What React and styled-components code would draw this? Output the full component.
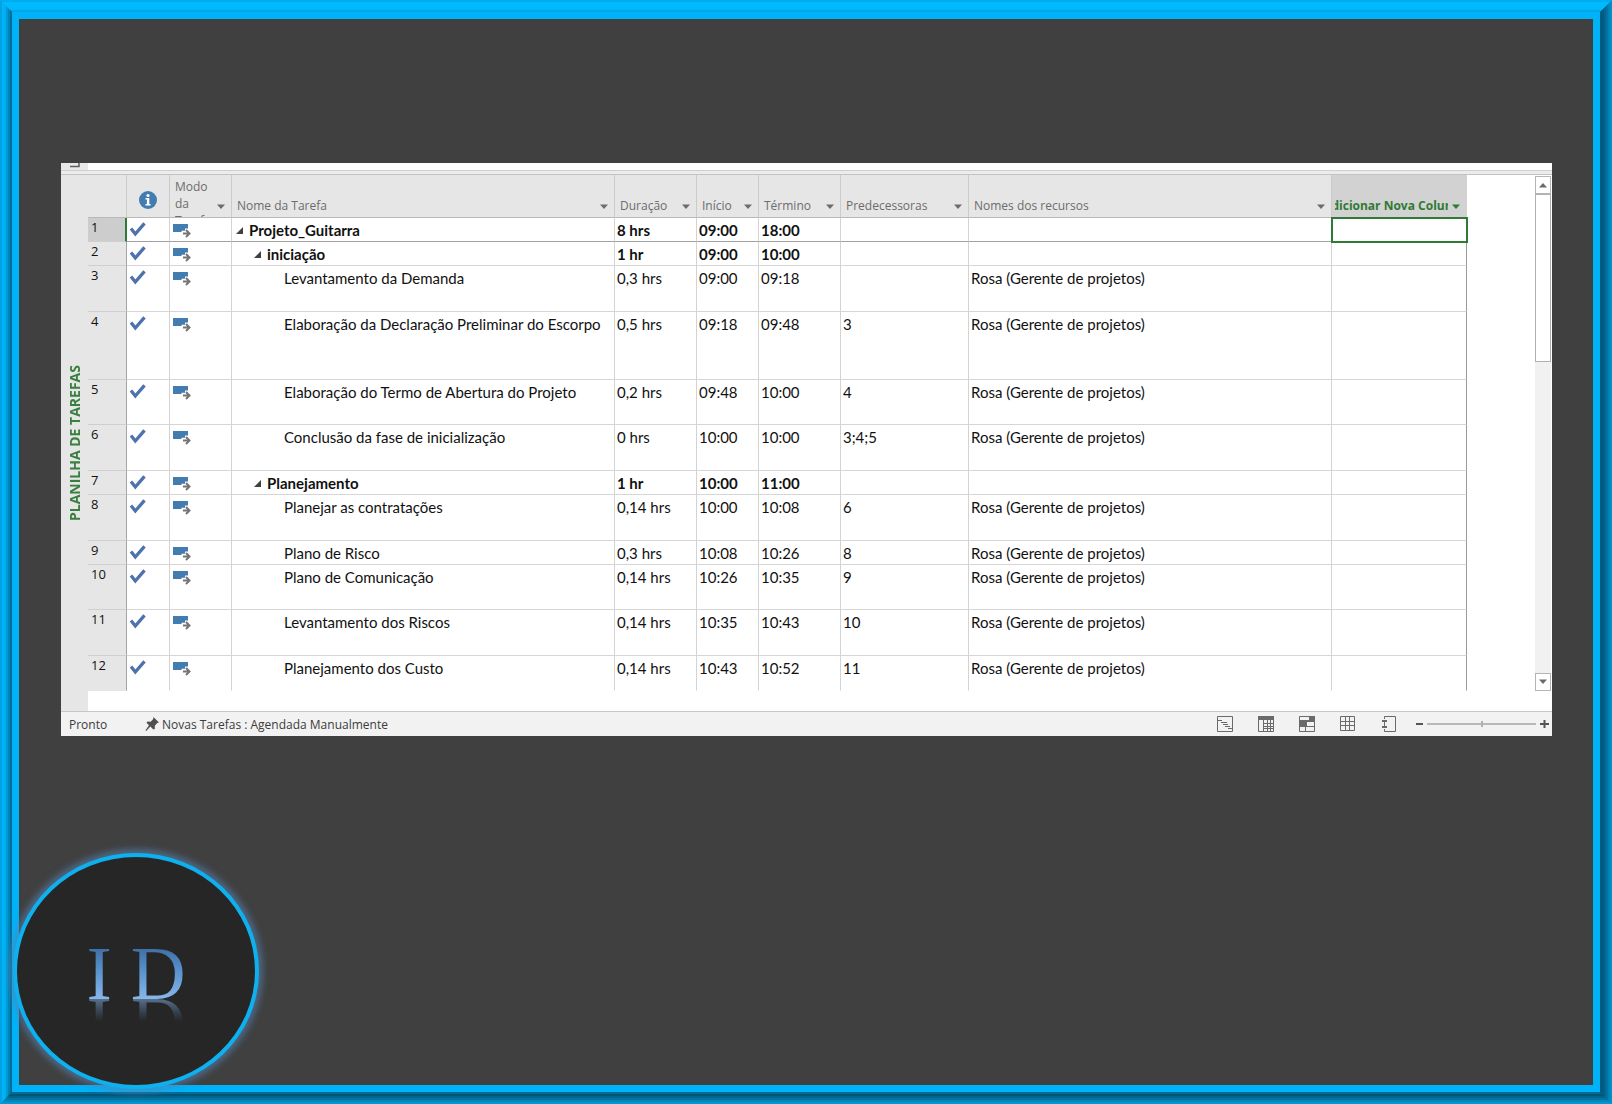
import React from 'react'
import styled, { createGlobalStyle } from 'styled-components'

/*
sky        #00b3f5 // frame and badge ring
charcoal   #404040 // page
green      #2f7a34 // selection
steel      #457cb0 // icons
light-grey #e6e6e6 // headers
*/

const SANS = "'Open Sans', 'Noto Sans', sans-serif"
const BODY = "Lato, 'Open Sans', sans-serif"

const GlobalStyle = createGlobalStyle`
  * { box-sizing: border-box; }
  body {
    margin: 0;
    background: #404040;
  }
  button {
    margin: 0;
    padding: 0;
    border: 0;
    background: none;
    font: inherit;
    color: inherit;
    cursor: pointer;
  }
`

const Bevel = styled.div`
  display: flex;
  flex: 1;
  flex-direction: column;
  min-width: 0;
  min-height: ${props => (props.$outer ? '100vh' : '0')};
  border-style: solid;
  border-width: ${props => props.$size}px;
  border-color: ${props => props.$colors};
`

const Slide = styled.main`
  flex: 1;
  padding: 144px 41px 42px 42px;
  background: #404040;
`

const Panel = styled.section`
  background: #ffffff;
  color: #111111;
  font-family: ${BODY};
  font-size: 15px;
`

const TopStrip = styled.div`
  display: flex;
  height: 12px;
  border-bottom: 1px solid #c3c3c3;
  background: linear-gradient(transparent 7px, #cfcfcf 7px, #cfcfcf 8px, #ececec 8px);
`
const TopCorner = styled.div`
  display: flex;
  align-items: flex-start;
  width: 27px;
  height: 7px;
  padding-left: 8px;
  background: #e9e9e9;
`

const Sheet = styled.div`
  display: flex;
  align-items: stretch;
`

const ViewRail = styled.div`
  display: flex;
  align-items: center;
  justify-content: center;
  width: 27px;
  background: #e6e6e6;
`
const ViewName = styled.h1`
  margin: 0;
  color: #3a7f3f;
  font-family: ${SANS};
  font-size: 14px;
  font-weight: 700;
  line-height: 20px;
  white-space: nowrap;
  writing-mode: vertical-rl;
  transform: rotate(180deg);
`

const GridArea = styled.div`
  flex: 1;
  min-width: 0;
  padding: 0 68px 20px 0;
`

const Table = styled.table`
  width: 100%;
  table-layout: fixed;
  border-collapse: separate;
  border-spacing: 0;
`

const HeadCell = styled.th`
  height: 43px;
  padding: 0;
  border-right: 1px solid ${props => (props.$active ? '#d2d2d2' : '#cbcbcb')};
  border-bottom: 1px solid #b9b9b9;
  background: ${props => (props.$active ? '#d2d2d2' : '#e6e6e6')};
  color: ${props => (props.$active ? '#2f7a34' : '#6c6c6c')};
  font-family: ${SANS};
  font-size: 12px;
  font-weight: ${props => (props.$active ? 700 : 400)};
  line-height: 17px;
  text-align: left;
  vertical-align: top;
`
const HeadInner = styled.div`
  display: flex;
  gap: 3px;
  align-items: ${props => (props.$wrap ? 'flex-start' : 'flex-end')};
  height: 42px;
  padding: 3px 5px 3px ${props => (props.$active ? 3 : 5)}px;
  overflow: hidden;
`
const HeadLabel = styled.span`
  display: flex;
  flex: 1;
  justify-content: ${props => (props.$active ? 'center' : 'flex-start')};
  min-width: 0;
  overflow: ${props => (props.$active ? 'hidden' : 'visible')};
  white-space: ${props => (props.$wrap ? 'normal' : 'nowrap')};
`
const HeadIcon = styled.div`
  display: flex;
  align-items: center;
  justify-content: center;
  height: 42px;
  padding-top: 7px;
`
const FilterButton = styled.button`
  display: flex;
  align-items: center;
  justify-content: center;
  align-self: flex-end;
  width: 10px;
  height: 14px;
`

const RowNumber = styled.th`
  padding: 0 0 0 3px;
  border-right: ${props => (props.$active ? '2px solid #2f7a34' : '1px solid #a3a3a3')};
  border-bottom: 1px solid ${props => (props.$last ? '#e6e6e6' : '#cfcfcf')};
  background: ${props => (props.$active ? '#cdcdcd' : '#e6e6e6')};
  font-family: ${SANS};
  font-size: 13px;
  font-weight: 400;
  line-height: 19px;
  text-align: left;
  vertical-align: top;
`

const Cell = styled.td`
  padding: 1px 2px 0;
  border-right: 1px solid ${props => (props.$edge ? '#9a9a9a' : '#d3d3d3')};
  border-bottom: 1px solid ${props => props.$line};
  font-weight: ${props => (props.$bold ? 700 : 400)};
  line-height: 22px;
  white-space: nowrap;
  vertical-align: top;
  outline: ${props => (props.$selected ? '2px solid #2f7a34' : 'none')};
  outline-offset: -1px;
  svg { display: block; }
`
const TaskName = styled.div`
  display: flex;
  align-items: center;
  padding-left: ${props => props.$indent}px;
`
const Collapse = styled.button`
  display: flex;
  width: 13px;
`

const ScrollBar = styled.div`
  display: flex;
  flex-direction: column;
  width: 17px;
  padding: 1px 1px 20px 0;
`
const ScrollButton = styled.button`
  display: flex;
  align-items: center;
  justify-content: center;
  height: 18px;
  border: 1px solid #b5b5b5;
  background: #ffffff;
  color: #6a6a6a;
`
const Track = styled.div`
  flex: 1;
  background: #f1f1f1;
`
const Thumb = styled.div`
  height: 35%;
  border: 1px solid #b0b0b0;
  background: #ffffff;
`

const StatusBar = styled.footer`
  display: flex;
  align-items: center;
  height: 25px;
  padding: 0 3px 0 8px;
  border-top: 1px solid #c6c6c6;
  background: #f2f2f2;
  color: #3c3c3c;
  font-family: ${SANS};
  font-size: 12px;
`
const StatusText = styled.span`
  width: 76px;
`
const NewTasks = styled.button`
  display: flex;
  align-items: center;
  gap: 2px;
`
const Views = styled.div`
  display: flex;
  gap: 25px;
  margin: 0 19px 0 auto;
`
const ViewButton = styled.button`
  display: flex;
`
const Zoom = styled.div`
  display: flex;
  align-items: center;
  gap: 4px;
`
const ZoomButton = styled.button`
  display: flex;
`
const ZoomSlider = styled.input`
  width: 109px;
  height: 12px;
  margin: 0;
  appearance: none;
  background: linear-gradient(#b8b8b8, #b8b8b8) center / 100% 2px no-repeat;
  &::-webkit-slider-thumb {
    appearance: none;
    width: 2px;
    height: 6px;
    background: #b0b0b0;
  }
`

// sits on top of the frame in the corner of the slide
const Badge = styled.div`
  position: absolute;
  left: 13px;
  top: 853px;
  display: flex;
  align-items: center;
  justify-content: center;
  width: 246px;
  height: 236px;
  padding-top: 4px;
  border: 4px solid #0fb0ee;
  border-radius: 50%;
  background: #262626;
  box-shadow: 0 0 6px 4px rgba(84, 130, 180, 0.6);
`
const Initials = styled.span`
  background: linear-gradient(#3f6ea5 20%, #5b95d0 50%, #86b6ea 80%);
  background-clip: text;
  color: transparent;
  font-family: 'Liberation Serif', serif;
  font-size: 76px;
  line-height: 84px;
  -webkit-box-reflect: below -32px linear-gradient(transparent 54%, rgba(0, 0, 0, 0.5) 80%);
`

const COLUMNS = [
  { id: 'mode', title: 'Modo da Tarefa', width: 62, wrap: true },
  { id: 'name', title: 'Nome da Tarefa', width: 383 },
  { id: 'duration', title: 'Duração', width: 82 },
  { id: 'start', title: 'Início', width: 62 },
  { id: 'end', title: 'Término', width: 82 },
  { id: 'pred', title: 'Predecessoras', width: 128 },
  { id: 'resource', title: 'Nomes dos recursos' },
  { id: 'add', title: 'Adicionar Nova Coluna', width: 135, active: true },
]

const ROSA = 'Rosa (Gerente de projetos)'

const TASKS = [
  { id: 1, height: 24, level: 0, name: 'Projeto_Guitarra', duration: '8 hrs', start: '09:00', end: '18:00' },
  { id: 2, height: 24, level: 1, name: 'iniciação', duration: '1 hr', start: '09:00', end: '10:00' },
  { id: 3, height: 46, level: 2, name: 'Levantamento da Demanda', duration: '0,3 hrs', start: '09:00', end: '09:18', resource: ROSA },
  { id: 4, height: 68, level: 2, name: 'Elaboração da Declaração Preliminar do Escorpo', duration: '0,5 hrs', start: '09:18', end: '09:48', pred: '3', resource: ROSA },
  { id: 5, height: 45, level: 2, name: 'Elaboração do Termo de Abertura do Projeto', duration: '0,2 hrs', start: '09:48', end: '10:00', pred: '4', resource: ROSA },
  { id: 6, height: 46, level: 2, name: 'Conclusão da fase de inicialização', duration: '0 hrs', start: '10:00', end: '10:00', pred: '3;4;5', resource: ROSA },
  { id: 7, height: 24, level: 1, name: 'Planejamento', duration: '1 hr', start: '10:00', end: '11:00' },
  { id: 8, height: 46, level: 2, name: 'Planejar as contratações', duration: '0,14 hrs', start: '10:00', end: '10:08', pred: '6', resource: ROSA },
  { id: 9, height: 24, level: 2, name: 'Plano de Risco', duration: '0,3 hrs', start: '10:08', end: '10:26', pred: '8', resource: ROSA },
  { id: 10, height: 45, level: 2, name: 'Plano de Comunicação', duration: '0,14 hrs', start: '10:26', end: '10:35', pred: '9', resource: ROSA },
  { id: 11, height: 46, level: 2, name: 'Levantamento dos Riscos', duration: '0,14 hrs', start: '10:35', end: '10:43', pred: '10', resource: ROSA },
  { id: 12, height: 35, level: 2, name: 'Planejamento dos Custo', duration: '0,14 hrs', start: '10:43', end: '10:52', pred: '11', resource: ROSA },
]

const INDENTS = [2, 20, 50]

// outer to inner: top right bottom left
const BEVELS = [
  { size: 2, colors: '#00aef0 #0090c8 #0098d4 #00a2e2' },
  { size: 2, colors: '#00b9ff #0082b6 #0088bc #00b4f8' },
  { size: 2, colors: '#00b9ff #0074a2 #0076a4 #00b0f2' },
  { size: 2, colors: '#00b9ff #006690 #00648c #009ad6' },
  { size: 2, colors: '#00b8fe #005c82 #005678 #0084b6' },
  { size: 2, colors: '#00a8e8 #005a80 #006a94 #006e98' },
  { size: 7, colors: '#00b3f8' },
]

const Arrow = ({ up }) => (
  <svg width="10" height="6" viewBox="0 0 10 6" aria-hidden="true">
    <path d={up ? 'M1 5.5h8L5 1z' : 'M1 .5h8L5 5z'} fill="currentColor" />
  </svg>
)

const InfoIcon = () => (
  <svg width="18" height="18" viewBox="0 0 18 18" role="img" aria-label="Indicadores">
    <circle cx="9" cy="9" r="9" fill="#457cb0" />
    <circle cx="9" cy="4.5" r="1.6" fill="#fff" />
    <path d="M6.5 7h3.8v6h1.3v1.5H6.5V13h1.4V8.5H6.5z" fill="#fff" />
  </svg>
)

const CheckIcon = () => (
  <svg width="19" height="20" viewBox="0 0 19 20" role="img" aria-label="Concluída">
    <path d="M2 9.500 6.300 15 15.500 4.300" fill="none" stroke="#4d72ac" strokeWidth="3.300" />
  </svg>
)

const ModeIcon = () => (
  <svg width="20" height="20" viewBox="0 0 20 20" role="img" aria-label="Agendada automaticamente">
    <path d="M1 5h15v4.500h-3v2.300H9.500V13H1z" fill="#457cb0" />
    <path d="M11 14.500h6M14 11l3.500 3.500L14 18" fill="none" stroke="#757575" strokeWidth="2" />
  </svg>
)

const PinIcon = () => (
  <svg width="15" height="16" viewBox="0 0 15 16" aria-hidden="true">
    <path d="M8.5 1 14 6.500l-1.800.6-2.400 2.600v3.200l-1.400.6-3-3L1.200 15 .4 14.500 4 9.200 1.500 6.800l1-1.300 3.200.2L8.200 3z" fill="#505050" />
  </svg>
)

const VIEW_ICONS = [
  { label: 'Gráfico de Gantt', line: 'M.5.5h15v15H.5zM0 4.500h5M4 6.500h6M6 8.500h5M8 10.500h5M11 12.500h5' },
  { label: 'Uso da Tarefa', line: 'M.5.5h15v15H.5zM5.500 4v12M9.500 4v12M12.500 4v12M5 7.500h11M5 10.500h11M5 12.500h11', solid: 'M0 0h16v4H0z' },
  { label: 'Planejador de Equipe', line: 'M.5.5h15v15H.5zM0 10.500h16M6.500 10v6M8 5.500h8M0 4.500h10', solid: 'M10 0h6v5h-6zM0 5h8v5H0z' },
  { label: 'Planilha de Recursos', line: 'M.5.5h14v14H.5zM5.500 0v15M9.500 0v15M0 5.500h15M0 9.500h15' },
  { label: 'Relatório', line: 'M3.500 3V.5h11v15h-11V13M3.500 6v4', solid: 'M1 4h5v2H1zM1 10h5v2H1z' },
]

const Frame = ({ layers, outer, children }) => {
  if (!layers.length) return children
  const [layer, ...rest] = layers
  return (
    <Bevel $size={layer.size} $colors={layer.colors} $outer={outer}>
      <Frame layers={rest}>{children}</Frame>
    </Bevel>
  )
}

const Header = ({ column }) => (
  <HeadCell scope="col" $active={column.active}>
    <HeadInner $wrap={column.wrap} $active={column.active}>
      <HeadLabel $wrap={column.wrap} $active={column.active}>{column.title}</HeadLabel>
      <FilterButton aria-label={'Filtrar ' + column.title}><Arrow /></FilterButton>
    </HeadInner>
  </HeadCell>
)

const TaskRow = ({ task }) => {
  const first = task.id === 1
  const last = task.id === TASKS.length
  const summary = task.level < 2
  const line = first ? '#a2a2a2' : last ? 'transparent' : '#d6d6d6'
  return (
    <tr style={{ height: task.height }}>
      <RowNumber scope="row" $active={first} $last={last}>{task.id}</RowNumber>
      <Cell $line={line}><CheckIcon /></Cell>
      <Cell $line={line}><ModeIcon /></Cell>
      <Cell $line={line} $bold={summary}>
        <TaskName $indent={INDENTS[task.level]}>
          {summary && (
            <Collapse aria-label={'Recolher ' + task.name}>
              <svg width="8" height="8" viewBox="0 0 8 8"><path d="M0 8h7V1z" fill="#404040" /></svg>
            </Collapse>
          )}
          {task.name}
        </TaskName>
      </Cell>
      <Cell $line={line} $bold={summary}>{task.duration}</Cell>
      <Cell $line={line} $bold={summary}>{task.start}</Cell>
      <Cell $line={line} $bold={summary}>{task.end}</Cell>
      <Cell $line={line}>{task.pred}</Cell>
      <Cell $line={line}>{task.resource}</Cell>
      <Cell $line={line} $edge $selected={first} />
    </tr>
  )
}

const TaskTable = () => (
  <Table>
    <colgroup>
      <col width="39" />
      <col width="43" />
      {COLUMNS.map(column => <col key={column.id} width={column.width} />)}
    </colgroup>
    <thead>
      <tr>
        <HeadCell as="td" />
        <HeadCell scope="col"><HeadIcon><InfoIcon /></HeadIcon></HeadCell>
        {COLUMNS.map(column => <Header key={column.id} column={column} />)}
      </tr>
    </thead>
    <tbody>
      {TASKS.map(task => <TaskRow key={task.id} task={task} />)}
    </tbody>
  </Table>
)

const Status = () => (
  <StatusBar>
    <StatusText>Pronto</StatusText>
    <NewTasks><PinIcon />Novas Tarefas : Agendada Manualmente</NewTasks>
    <Views>
      {VIEW_ICONS.map(icon => (
        <ViewButton key={icon.label} aria-label={icon.label}>
          <svg width="16" height="16" viewBox="0 0 16 16">
            <path d={icon.line} fill="none" stroke="#6a6a6a" />
            {icon.solid && <path d={icon.solid} fill="#6a6a6a" />}
          </svg>
        </ViewButton>
      ))}
    </Views>
    <Zoom>
      <ZoomButton aria-label="Reduzir">
        <svg width="7" height="10" viewBox="0 0 7 10"><path d="M0 5h7" stroke="#555" strokeWidth="2" /></svg>
      </ZoomButton>
      <ZoomSlider type="range" aria-label="Zoom" defaultValue="50" />
      <ZoomButton aria-label="Ampliar">
        <svg width="9" height="10" viewBox="0 0 9 10"><path d="M0 5h9M4.500 1v8" stroke="#555" strokeWidth="2" /></svg>
      </ZoomButton>
    </Zoom>
  </StatusBar>
)

export default () => (
  <>
    <GlobalStyle />
    <Frame layers={BEVELS} outer>
      <Slide>
        <Panel>
          <TopStrip>
            <TopCorner>
              <svg width="12" height="6" viewBox="0 0 12 6" aria-hidden="true">
                <path d="M1 3.500h9V0" fill="none" stroke="#606060" strokeWidth="1.500" />
              </svg>
            </TopCorner>
          </TopStrip>
          <Sheet>
            <ViewRail><ViewName>PLANILHA DE TAREFAS</ViewName></ViewRail>
            <GridArea><TaskTable /></GridArea>
            <ScrollBar>
              <ScrollButton aria-label="Rolar para cima"><Arrow up /></ScrollButton>
              <Track><Thumb /></Track>
              <ScrollButton aria-label="Rolar para baixo"><Arrow /></ScrollButton>
            </ScrollBar>
          </Sheet>
          <Status />
        </Panel>
      </Slide>
    </Frame>
    <Badge><Initials>I D</Initials></Badge>
  </>
)
